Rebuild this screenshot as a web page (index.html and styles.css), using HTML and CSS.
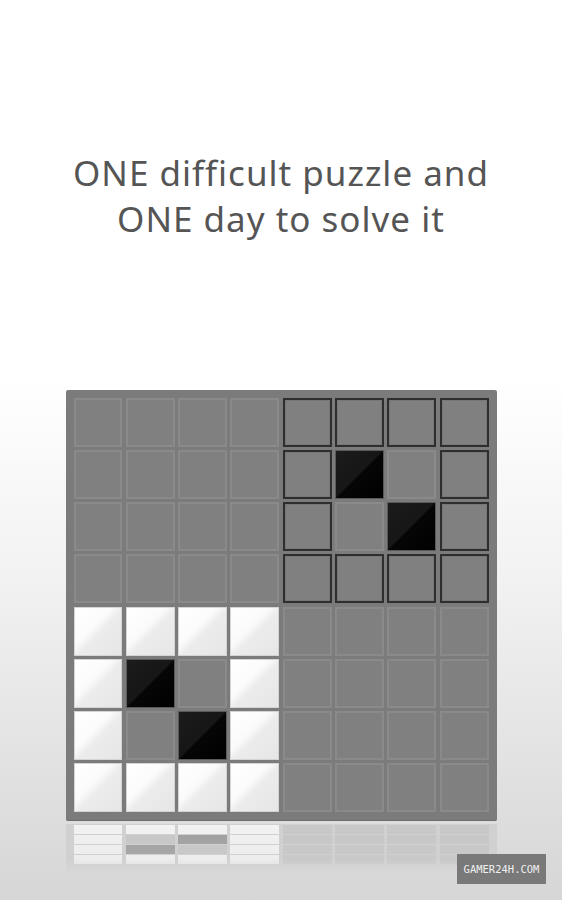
FILE: index.html
```html
<!DOCTYPE html>
<html lang="en">
<head>
<meta charset="UTF-8">
<meta name="viewport" content="width=device-width, initial-scale=1.0">
<title>ONE puzzle</title>
<link rel="stylesheet" href="styles.css">
</head>
<body>

<div class="screen">
    <h1 class="tagline">ONE difficult puzzle and<br>ONE day to solve it</h1>

    <div class="board" id="board">
        <!-- cells inserted by script -->
    </div>
    <div class="reflection" id="reflection"></div>

    <div class="watermark">GAMER24H.COM</div>
</div>

<script>
    // g = plain grey, d = dark outline, b = black, w = white
    const layout = [
        "ggggdddd",
        "ggggdbgd",
        "ggggdgbd",
        "ggggdddd",
        "wwwwgggg",
        "wbgwgggg",
        "wgbwgggg",
        "wwwwgggg"
    ];
    const names = { g: "grey", d: "outlined", b: "black", w: "white" };

    const board = document.getElementById("board");
    layout.forEach((row) => {
        [...row].forEach((c) => {
            const cell = document.createElement("div");
            cell.className = "cell " + names[c];
            board.appendChild(cell);
        });
    });

    // reflection: bottom four rows, upside down and squashed
    const reflection = document.getElementById("reflection");
    layout.slice(4).reverse().forEach((row) => {
        [...row].forEach((c) => {
            const cell = document.createElement("div");
            cell.className = "ghost " + names[c];
            reflection.appendChild(cell);
        });
    });
</script>

</body>
</html>
```

FILE: styles.css
```css
/* page */
html, body {
    margin: 0;
    padding: 0;
}
body {
    font-family: "Noto Sans", "Open Sans", sans-serif;
}
.screen {
    position: relative;
    height: 900px;
    overflow: hidden;
    background: linear-gradient(#ffffff 0%, #ffffff 42%, #f2f2f2 64%, #d6d6d6 100%);
    display: flex;
    flex-direction: column;
    align-items: center;
}

/* headline */
.tagline {
    margin: 150px 0 0;
    font-size: 35px;
    font-weight: normal;
    line-height: 46px;
    letter-spacing: 1px;
    color: #555;
    text-align: center;
}

/* board */
.board {
    margin-top: 148px;
    width: 431px;
    height: 431px;
    box-sizing: border-box;
    padding: 8px;
    background-color: #7b7b7b;
    border-radius: 2px;
    border-bottom: 1px solid #6c6c6c;
    display: grid;
    grid-template-columns: repeat(8, 1fr);
    grid-template-rows: repeat(8, 1fr);
    gap: 3.3px;
}
.cell {
    box-sizing: border-box;
    border: 2px solid #8a8a8a;
    background-color: #808080;
}
.cell.outlined {
    border: 2px solid #2e2e2e;
    box-shadow: inset 0 0 0 1px #777;
}
.cell.black {
    border: 1px solid #5a5a5a;
    background: linear-gradient(to bottom right, #1c1c1c 0%, #161616 49%, #060606 51%, #000 100%);
}
.cell.white {
    border: 1px solid #d4d4d4;
    background: linear-gradient(to bottom right, #ffffff 0%, #fbfbfb 40%, #f1f1f1 49%, #ececec 53%, #e6e6e6 100%);
}

/* reflection under the board */
.reflection {
    margin-top: 3px;
    width: 431px;
    height: 50px;
    box-sizing: border-box;
    padding: 1px 8px;
    background-color: rgba(0, 0, 0, 0.05);
    display: grid;
    grid-template-columns: repeat(8, 1fr);
    grid-template-rows: repeat(4, 9px);
    column-gap: 3.3px;
    row-gap: 1px;
    -webkit-mask-image: linear-gradient(#000 0%, rgba(0, 0, 0, 0.8) 70%, transparent 100%);
    mask-image: linear-gradient(#000 0%, rgba(0, 0, 0, 0.8) 70%, transparent 100%);
}
.ghost {
    background-color: rgba(128, 128, 128, 0.06);
}
.ghost.white {
    background-color: rgba(255, 255, 255, 0.7);
}
.ghost.black {
    background-color: rgba(60, 60, 60, 0.35);
}
.ghost.grey {
    background-color: rgba(110, 110, 110, 0.1);
}

/* watermark */
.watermark {
    position: absolute;
    right: 16px;
    bottom: 16px;
    width: 89px;
    height: 30px;
    background-color: #797979;
    color: #f0f0f0;
    font-family: "DejaVu Sans Mono", "Liberation Mono", monospace;
    font-size: 10.5px;
    line-height: 30px;
    text-align: center;
}
```
